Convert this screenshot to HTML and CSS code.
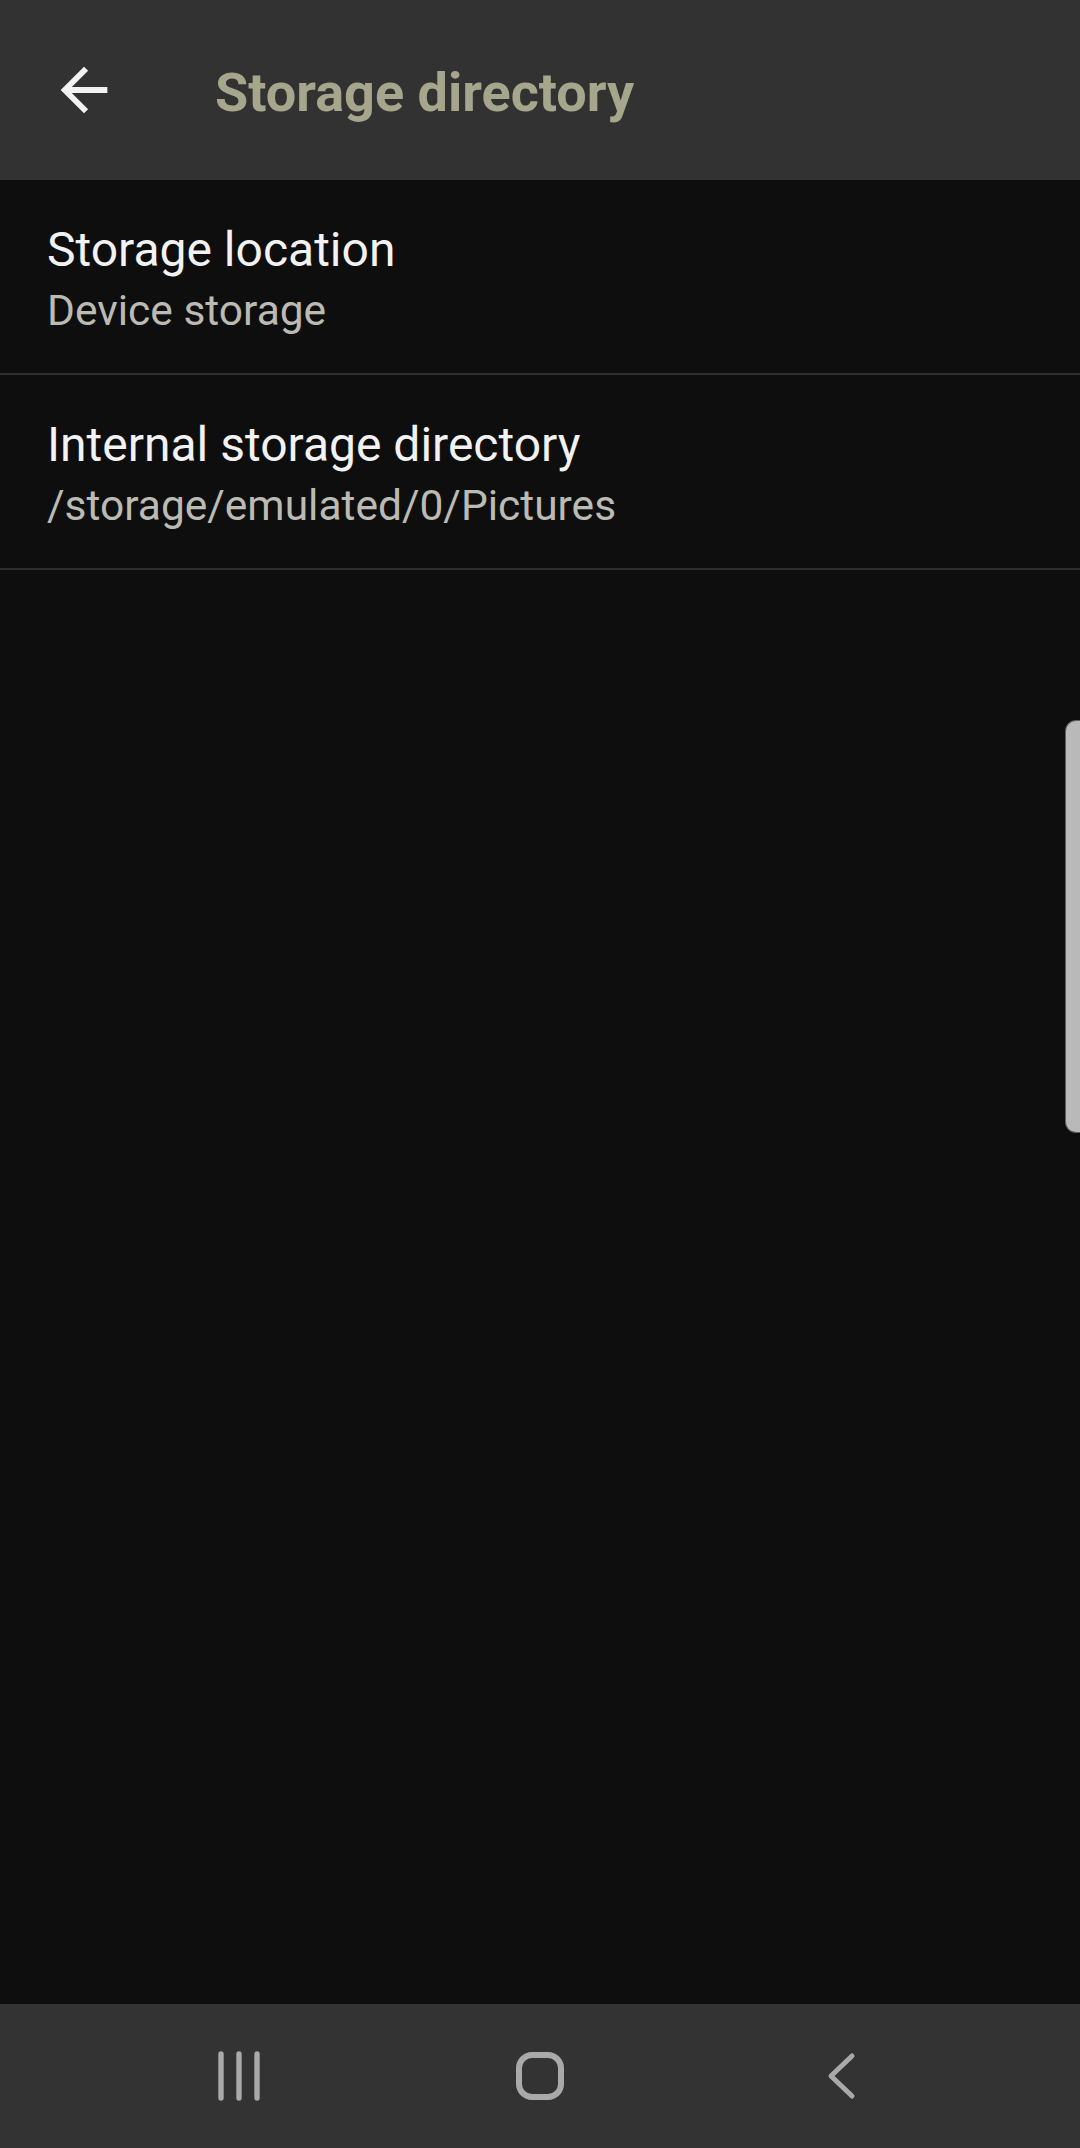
FILE: index.html
```html
<!DOCTYPE html>
<html>
<head>
<meta charset="utf-8">
<link rel="stylesheet" href="styles.css">
</head>
<body>
<div class="screen">
  <header class="appbar">
    <svg class="back" viewBox="0 0 24 24" width="70" height="70"><path d="M20 11H7.83l5.59-5.59L12 4l-8 8 8 8 1.41-1.41L7.83 13H20v-2z" fill="#f2f2f2"/></svg>
    <h1 class="title">Storage directory</h1>
  </header>
  <main class="list">
    <div class="row">
      <div class="row-title">Storage location</div>
      <div class="row-sub">Device storage</div>
    </div>
    <div class="row">
      <div class="row-title">Internal storage directory</div>
      <div class="row-sub">/storage/emulated/0/Pictures</div>
    </div>
  </main>
  <div class="scrollbar"></div>
  <nav class="navbar">
    <div class="nav-item">
      <svg width="50" height="56" viewBox="0 0 50 56"><g stroke="#a9a9a9" stroke-width="5.4" stroke-linecap="round"><line x1="7" y1="6" x2="7" y2="50"/><line x1="25" y1="6" x2="25" y2="50"/><line x1="43" y1="6" x2="43" y2="50"/></g></svg>
    </div>
    <div class="nav-item">
      <svg width="56" height="56" viewBox="0 0 56 56"><rect x="7" y="7" width="42" height="42" rx="13" fill="none" stroke="#a9a9a9" stroke-width="6"/></svg>
    </div>
    <div class="nav-item">
      <svg width="40" height="56" viewBox="0 0 40 56"><polyline points="31,8 10,28 31,48" fill="none" stroke="#a9a9a9" stroke-width="5" stroke-linecap="round" stroke-linejoin="round"/></svg>
    </div>
  </nav>
</div>
</body>
</html>
```
FILE: styles.css
```css
* { box-sizing: border-box; }
html, body {
  margin: 0;
  padding: 0;
  background: #0e0e0e;
}
body {
  font-family: Roboto, "Noto Sans", sans-serif;
}
.screen {
  position: relative;
  width: 1080px;
  height: 2148px;
  display: flex;
  flex-direction: column;
  background: #0e0e0e;
  overflow: hidden;
}
.appbar {
  height: 180px;
  flex: none;
  background: #323232;
  display: flex;
  align-items: center;
  padding-left: 49px;
}
.back {
  flex: none;
  display: block;
}
.title {
  margin: 0 0 0 96px;
  padding-top: 5px;
  font-size: 54px;
  font-weight: 700;
  line-height: 63px;
  color: #a5a68b;
}
.list {
  flex: 1;
}
.row {
  padding: 42px 47px 33px;
  border-bottom: 2px solid #2e2e2e;
}
.row-title {
  font-size: 48px;
  line-height: 56px;
  color: #f2f2f2;
}
.row-sub {
  margin-top: 4px;
  font-size: 42.5px;
  line-height: 58px;
  color: #bbbbb3;
}
.scrollbar {
  position: absolute;
  top: 720px;
  right: 0;
  width: 15px;
  height: 413px;
  background: #b9b9b9;
  border: 1px solid #5e5e5e;
  border-right: none;
  border-radius: 11px 0 0 11px;
}
.navbar {
  flex: none;
  height: 144px;
  background: #333333;
  display: flex;
  justify-content: center;
  align-items: center;
}
.nav-item {
  width: 301px;
  display: flex;
  justify-content: center;
  align-items: center;
}
.nav-item svg { display: block; }
```
